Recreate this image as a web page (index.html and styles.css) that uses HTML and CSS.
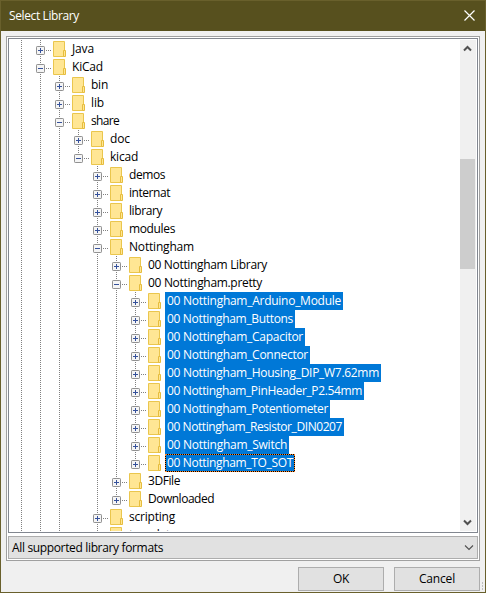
FILE: index.html
```html
<!DOCTYPE html>
<html lang="en">
<head>
<meta charset="utf-8">
<title>Select Library</title>
<link rel="stylesheet" href="styles.css">
</head>
<body>
<div class="window">
  <header class="titlebar">
    <span class="title" data-w="70">Select Library</span>
    <svg class="close" width="11" height="11" viewBox="0 0 11 11"><path d="M.5 .5L10.500 10.500M10.500 .5L.5 10.500"/></svg>
  </header>
  <main class="panel">
    <div class="treebox">
      <div class="tree" id="tree"></div>
      <div class="scrollbar">
        <svg class="arrow" width="9" height="7" viewBox="0 0 9 7"><path d="M1 5.500L4.500 2L8 5.500"/></svg>
        <div class="thumb"></div>
        <svg class="arrow down" width="9" height="7" viewBox="0 0 9 7"><path d="M1 1.500L4.500 5L8 1.500"/></svg>
      </div>
    </div>
    <div class="combo">
      <span data-w="151">All supported library formats</span>
      <svg width="10" height="6" viewBox="0 0 10 6"><path d="M1 .5L5 4.500L9 .5"/></svg>
    </div>
  </main>
  <footer class="buttons">
    <div class="button"><span data-w="16">OK</span></div>
    <div class="button"><span data-w="36">Cancel</span></div>
  </footer>
  <div class="grip"></div>
</div>
<script src="tree.js"></script>
</body>
</html>
```
FILE: styles.css
```css
* { box-sizing: border-box; }
body { margin: 0; overflow: hidden; font: 12px/18px "Open Sans", "Noto Sans", sans-serif; color: #000; }
.window { position: relative; width: 486px; height: 593px; border: 1px solid #69602c; background: #f0f0f0; }
.titlebar { height: 30px; display: flex; align-items: center; justify-content: space-between; padding: 0 10px 1px 8px; background: #57501e; color: #fff; }
.titlebar path { stroke: #fff; stroke-width: 1.2; fill: none; }
.panel { width: 474px; height: 525px; margin: 5px 0 0 5px; padding: 1px; border: 1px solid #a0a0a0; background: #fff; }
.treebox { display: flex; height: 495px; border: 1px solid #828790; padding: 1px; background: #fff; }
.tree { flex: 1; overflow: hidden; min-width: 0; }
.row { display: flex; height: 18px; padding-left: 2px; }
.cell { flex: none; width: 19px; height: 18px; padding: 6px 0 0 5px; background: repeating-linear-gradient(#808080 0 1px, transparent 1px 2px) 9px 0 / 1px 18px no-repeat; }
.cell.blank { background: none; }
.cell.last { background-size: 1px 8px; }
.toggle { display: block; }
.dash { flex: none; width: 5px; height: 1px; margin: 10px 2px 0 -4px; background: repeating-linear-gradient(90deg, #808080 0 1px, transparent 1px 2px); }
.folder { flex: none; margin: 1px 3px 0 0; }
.row:last-child { height: 5px; overflow: hidden; }
.label { display: block; height: 18px; padding: 0 2px; white-space: nowrap; }
.title, .combo span, .button span { white-space: nowrap; }
.selected { background: #0078d7; color: #fff; }
.focus { outline: 1px dotted #ff8728; outline-offset: -1px; box-shadow: inset 0 0 0 1px #000; }
.scrollbar { width: 16px; display: flex; flex-direction: column; align-items: flex-start; background: #f0f0f0; padding: 5px 0; }
.arrow { margin-left: 3px; }
.arrow path { fill: none; stroke: #505050; stroke-width: 2; }
.thumb { width: 15px; height: 110px; margin-top: 107px; background: #cdcdcd; }
.down { margin-top: auto; }
.combo { height: 23px; margin-top: 3px; border: 1px solid #adadad; background: #e1e1e1; display: flex; align-items: center; justify-content: space-between; padding: 0 3px; }
.combo path { fill: none; stroke: #505050; stroke-width: 1.1; }
.buttons { display: flex; justify-content: flex-end; gap: 10px; padding: 6px 5px 0 0; }
.button { width: 86px; height: 24px; border: 1px solid #adadad; background: #e1e1e1; display: flex; align-items: center; justify-content: center; }
.grip { position: absolute; right: 2px; bottom: 1px; width: 1px; height: 9px; background: repeating-linear-gradient(#bfbfbf 0 2px, transparent 2px 3px); }
```
FILE: tree.js
```js
// [depth, label, expanded, label width]
const rows = [
  [1, "Java", 0, 22], [1, "KiCad", 1, 31], [2, "bin", 0, 17], [2, "lib", 0, 13],
  [2, "share", 1, 28], [3, "doc", 0, 20], [3, "kicad", 1, 28], [4, "demos", 0, 36],
  [4, "internat", 0, 41], [4, "library", 0, 33], [4, "modules", 0, 46], [4, "Nottingham", 1, 65],
  [5, "00 Nottingham Library", 0, 119], [5, "00 Nottingham.pretty", 1, 114],
  [6, "00 Nottingham_Arduino_Module", 0, 174], [6, "00 Nottingham_Buttons", 0, 126],
  [6, "00 Nottingham_Capacitor", 0, 136], [6, "00 Nottingham_Connector", 0, 141],
  [6, "00 Nottingham_Housing_DIP_W7.62mm", 0, 212], [6, "00 Nottingham_PinHeader_P2.54mm", 0, 195],
  [6, "00 Nottingham_Potentiometer", 0, 161], [6, "00 Nottingham_Resistor_DIN0207", 0, 175],
  [6, "00 Nottingham_Switch", 0, 120], [6, "00 Nottingham_TO_SOT", 0, 126],
  [5, "3DFile", 0, 32], [5, "Downloaded", 0, 66], [4, "scripting", 0, 46], [4, "template", 0, 47]
];
const hasNext = (i, depth) => {
  for (let j = i + 1; j < rows.length; j++) {
    if (rows[j][0] < depth) return depth < 3;
    if (rows[j][0] === depth) return true;
  }
  return depth !== 3;
};
const toggle = open => `<svg class="toggle" width="9" height="9" viewBox="0 0 9 9"><rect x=".5" y=".5" width="8" height="8" rx=".7" fill="#f5f5f5" stroke="#919191"/><path d="M2 4.500H7${open ? "" : "M4.500 2V7"}" stroke="#35519b" fill="none"/></svg>`;
const folder = `<svg class="folder" width="14" height="16" viewBox="0 0 14 16"><path d="M.5 .5H11.500V15.500H.5Z" fill="#ffe694" stroke="#eac64d"/><path d="M10.500 9.500H12.500V15.500H10.500Z" fill="#ffe694" stroke="#e6bd3e"/></svg>`;
document.getElementById("tree").innerHTML = rows.map(([depth, text, open, width], i) => {
  let cells = "";
  for (let d = 0; d <= depth; d++) {
    const next = hasNext(i, d);
    cells += `<div class="cell${next ? "" : d === depth ? " last" : " blank"}">${d === depth ? toggle(open) : ""}</div>`;
  }
  const state = depth === 6 ? " selected" + (text.endsWith("SOT") ? " focus" : "") : "";
  return `<div class="row">${cells}<div class="dash"></div>${folder}<div class="label${state}"><span data-w="${width}">${text}</span></div></div>`;
}).join("");

// Fit each caption to its measured width by even tracking.
document.querySelectorAll("[data-w]").forEach(el => {
  const gap = (el.dataset.w - el.getBoundingClientRect().width) / el.textContent.length;
  el.style.letterSpacing = gap + "px";
});
```
